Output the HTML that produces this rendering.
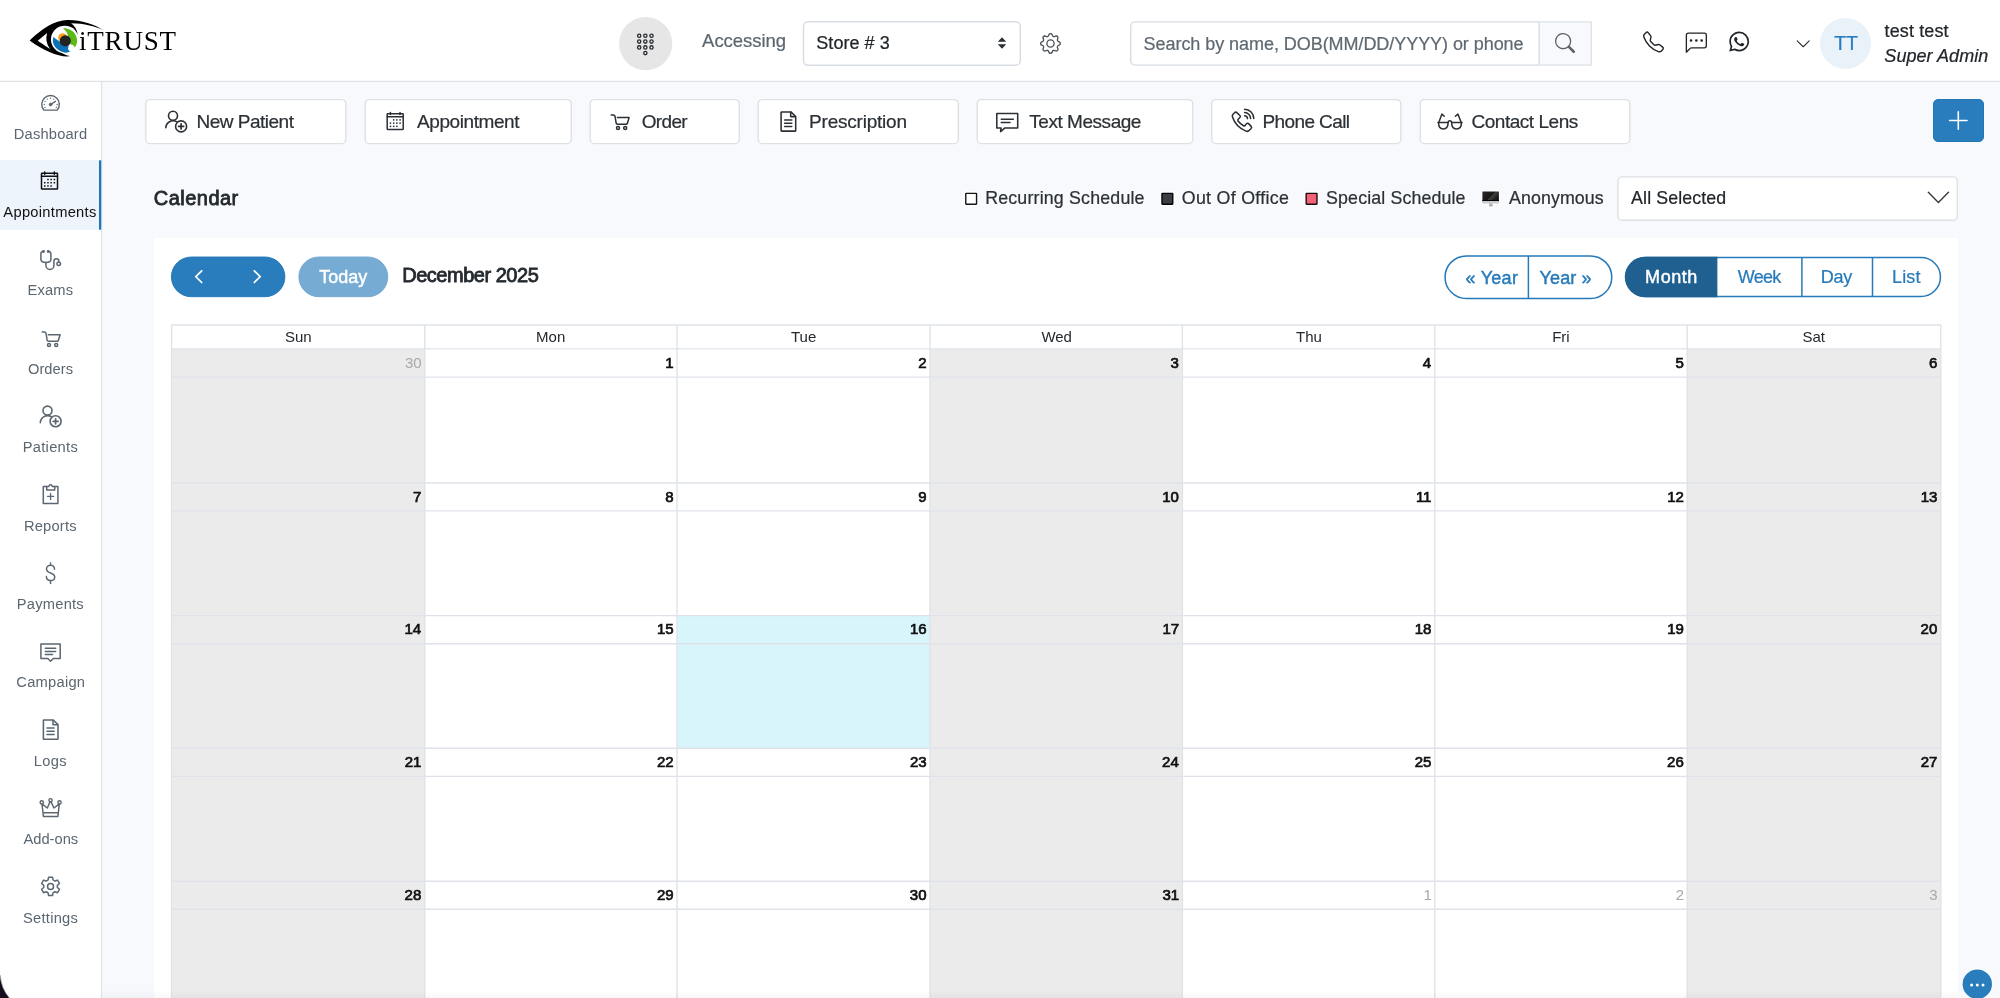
<!DOCTYPE html>
<html lang="en">
<head>
<meta charset="utf-8">
<title>iTRUST - Calendar</title>
<style>
*{box-sizing:border-box;margin:0;padding:0}
html,body{width:2000px;height:998px;overflow:hidden;background:#f7f9fc;font-family:"Liberation Sans",sans-serif;color:#212529}
body{position:relative}
#txt{position:absolute;left:0;top:0;width:2000px;height:998px;will-change:transform}
.t{position:absolute;white-space:nowrap}
svg{overflow:visible}
</style>
</head>
<body>
<div style="position:absolute;left:0px;top:0px;width:2000px;height:81px;background:#fff;"></div>
<div style="position:absolute;left:0px;top:81px;width:101px;height:917px;background:#fff;"></div>
<div style="position:absolute;left:0px;top:160px;width:98px;height:70px;background:#eef4fc;"></div>
<div style="position:absolute;left:154px;top:238px;width:1804px;height:760px;background:#fff;"></div>
<svg style="position:absolute;left:20px;top:10px;" width="170" height="60" viewBox="20 10 170 60">
<path d="M29.7 40.4 C34 36.3 41 30.2 48.5 25.8 C54 22.4 61 20 67.4 19.9 C80 19.5 94 24 104.6 30.5 C96 26.8 84 23.3 71.1 23.3 C75 26 77.2 30.2 77.8 34.9 C76 30.8 74 28.3 71.3 27.3 A13.8 13.8 0 1 0 61.7 52.9 C64.5 54.5 67.5 55.6 70.4 56.1 C61 58 44 51 29.7 40.4 Z" fill="#000"/>
<path d="M37.7 40.7 L47.1 32.9 A18 18 0 0 0 50 48.9 Z" fill="#fff"/>
<path d="M63.1 28.4 C67.5 28 72.5 30.5 74.9 33.8 C77.2 37.3 77.8 41.5 76.3 45.1 C75.8 46.3 75.2 47 74.4 47.5 C74.3 46 73.6 45.3 72.6 45.1 C71.5 44.9 70.7 44.2 70 43.5 L66 40 L68 35.5 C67.5 33 65.5 30 63.1 28.4 Z" fill="#5cba17"/>
<path d="M53.3 37.1 C52.3 41 53 44.5 55.1 47 C57.5 50 61.5 52.3 65.5 52.7 C67.3 52.8 69 52.3 70.4 51.3 C69 50.7 68 49.7 68.1 48.4 C68.2 47.3 68.5 46.4 68.8 45.6 L65 42 L60 42 C58.5 40.5 56 39.5 53.3 37.1 Z" fill="#0b73b5"/>
<circle cx="62.6" cy="37.6" r="4.4" fill="#f8a21b"/>
<circle cx="65.3" cy="40.9" r="5.6" fill="#232323"/>
</svg>
<svg style="position:absolute;left:0px;top:0px;" width="2000" height="82" viewBox="0 0 2000 82"><circle cx="645.7" cy="43.6" r="26.6" fill="#e6e6e6"/><g fill="none" stroke="#272b30" stroke-width="1.3"><circle cx="639.20" cy="35.80" r="1.65"/><circle cx="645.35" cy="35.80" r="1.65"/><circle cx="651.50" cy="35.80" r="1.65"/><circle cx="639.20" cy="41.60" r="1.65"/><circle cx="645.35" cy="41.60" r="1.65"/><circle cx="651.50" cy="41.60" r="1.65"/><circle cx="639.20" cy="47.40" r="1.65"/><circle cx="645.35" cy="47.40" r="1.65"/><circle cx="651.50" cy="47.40" r="1.65"/><circle cx="645.35" cy="53.1" r="1.65"/></g></svg>
<div style="position:absolute;left:1820px;top:18px;width:51px;height:51px;background:#e9f1f9;border-radius:50%;"></div>
<div style="position:absolute;left:1933px;top:99px;width:51px;height:43px;background:#297dbd;border:1px solid #2276b6;border-radius:5px;"></div>
<svg style="position:absolute;left:0px;top:0px;" width="2000" height="998" viewBox="0 0 2000 998"><rect x="171.60" y="348.90" width="253.10" height="651.10" fill="#ebebeb"/><rect x="930.00" y="348.90" width="252.40" height="651.10" fill="#ebebeb"/><rect x="1687.20" y="348.90" width="253.60" height="651.10" fill="#ebebeb"/><rect x="677.00" y="615.60" width="253.00" height="132.70" fill="#d9f5fc"/><path d="M171.60 324.30V1000M424.70 324.30V1000M677.00 324.30V1000M930.00 324.30V1000M1182.40 324.30V1000M1434.80 324.30V1000M1687.20 324.30V1000M1940.80 324.30V1000M170.90 325.0H1941.50M171.60 348.9H1940.80M171.60 377.10H1940.80M171.60 483.00H1940.80M171.60 510.90H1940.80M171.60 615.60H1940.80M171.60 643.70H1940.80M171.60 748.30H1940.80M171.60 776.40H1940.80M171.60 881.20H1940.80M171.60 909.20H1940.80" stroke="#dfe3e9" stroke-width="1.4" fill="none"/><path d="M0 81.4H2000" stroke="#dde1e6" stroke-width="1.3"/><path d="M101.55 82V998" stroke="#dfe3ea" stroke-width="1.3"/></svg>
<svg style="position:absolute;left:0px;top:0px;pointer-events:none;" width="2000" height="998" viewBox="0 0 2000 998"><rect x="98.9" y="160.3" width="2.3" height="69.4" fill="#1f76b8"/><rect x="803.5" y="21.8" width="216.8" height="43.4" rx="4.5" fill="#fff" stroke="#d8dde3" stroke-width="1.4"/><g transform="translate(997 37) scale(1.00000 1.00000)"><path d="M5 0.3L9.2 4.8H0.8Z M5 11.7L0.8 7.2H9.2Z" fill="#2b3035"/></g><g transform="translate(1040 33) scale(1.31250 1.31250)"><g fill="#4a5158"><path d="M8 4.754a3.246 3.246 0 1 0 0 6.492 3.246 3.246 0 0 0 0-6.492zM5.754 8a2.246 2.246 0 1 1 4.492 0 2.246 2.246 0 0 1-4.492 0z"/><path d="M9.796 1.343c-.527-1.79-3.065-1.79-3.592 0l-.094.319a.873.873 0 0 1-1.255.52l-.292-.16c-1.64-.892-3.433.902-2.54 2.541l.159.292a.873.873 0 0 1-.52 1.255l-.319.094c-1.79.527-1.79 3.065 0 3.592l.319.094a.873.873 0 0 1 .52 1.255l-.16.292c-.892 1.64.901 3.434 2.541 2.54l.292-.159a.873.873 0 0 1 1.255.52l.094.319c.527 1.79 3.065 1.79 3.592 0l.094-.319a.873.873 0 0 1 1.255-.52l.292.16c1.64.893 3.434-.902 2.54-2.541l-.159-.292a.873.873 0 0 1 .52-1.255l.319-.094c1.79-.527 1.79-3.065 0-3.592l-.319-.094a.873.873 0 0 1-.52-1.255l.16-.292c.893-1.64-.902-3.433-2.541-2.54l-.292.159a.873.873 0 0 1-1.255-.52l-.094-.319zm-2.633.283c.246-.835 1.428-.835 1.674 0l.094.319a1.873 1.873 0 0 0 2.693 1.115l.291-.16c.764-.415 1.6.42 1.184 1.185l-.159.292a1.873 1.873 0 0 0 1.116 2.692l.318.094c.835.246.835 1.428 0 1.674l-.319.094a1.873 1.873 0 0 0-1.115 2.693l.16.291c.415.764-.42 1.6-1.185 1.184l-.291-.159a1.873 1.873 0 0 0-2.693 1.116l-.094.318c-.246.835-1.428.835-1.674 0l-.094-.319a1.873 1.873 0 0 0-2.692-1.115l-.292.16c-.764.415-1.6-.42-1.184-1.185l.159-.291A1.873 1.873 0 0 0 1.945 8.93l-.319-.094c-.835-.246-.835-1.428 0-1.674l.319-.094A1.873 1.873 0 0 0 3.06 4.377l-.16-.292c-.415-.764.42-1.6 1.185-1.184l.292.159a1.873 1.873 0 0 0 2.692-1.115l.094-.319z"/></g></g><path d="M1539.3 21.9H1135A4.3 4.3 0 0 0 1130.7 26.2V60.8A4.3 4.3 0 0 0 1135 65.1H1539.3Z" fill="#fff" stroke="#d8dde3" stroke-width="1.4"/><rect x="1539.3" y="21.9" width="52" height="43.2" fill="#f7f9fc" stroke="#e0e4e9" stroke-width="1.4"/><g transform="translate(1555 33) scale(1.25000 1.25000)"><g fill="#5a626a"><path d="M11.742 10.344a6.5 6.5 0 1 0-1.397 1.398h-.001c.03.04.062.078.098.115l3.85 3.85a1 1 0 0 0 1.415-1.414l-3.85-3.85a1.007 1.007 0 0 0-.115-.1zM12 6.5a5.5 5.5 0 1 1-11 0 5.5 5.5 0 0 1 11 0z"/></g></g><g transform="translate(1643 31.5) scale(1.31250 1.31250)"><g fill="#212529"><path d="M3.654 1.328a.678.678 0 0 0-1.015-.063L1.605 2.3c-.483.484-.661 1.169-.45 1.77a17.568 17.568 0 0 0 4.168 6.608 17.569 17.569 0 0 0 6.608 4.168c.601.211 1.286.033 1.77-.45l1.034-1.034a.678.678 0 0 0-.063-1.015l-2.307-1.794a.678.678 0 0 0-.58-.122l-2.19.547a1.745 1.745 0 0 1-1.657-.459L5.482 8.062a1.745 1.745 0 0 1-.46-1.657l.548-2.19a.678.678 0 0 0-.122-.58L3.654 1.328zM1.884.511a1.745 1.745 0 0 1 2.612.163L6.29 2.98c.329.423.445.974.315 1.494l-.547 2.19a.678.678 0 0 0 .178.643l2.457 2.457a.678.678 0 0 0 .644.178l2.189-.547a1.745 1.745 0 0 1 1.494.315l2.306 1.794c.829.645.905 1.87.163 2.611l-1.034 1.034c-.74.74-1.846 1.065-2.877.702a18.634 18.634 0 0 1-7.01-4.42 18.634 18.634 0 0 1-4.42-7.009c-.362-1.03-.037-2.137.703-2.877L1.885.511z"/></g></g><g transform="translate(1685.7 32.5) scale(1.33125 1.33125)"><g fill="#212529"><path d="M14 1a1 1 0 0 1 1 1v8a1 1 0 0 1-1 1H4.414A2 2 0 0 0 3 11.586l-2 2V2a1 1 0 0 1 1-1h12zM2 0a2 2 0 0 0-2 2v12.793a.5.5 0 0 0 .854.353l2.853-2.853A1 1 0 0 1 4.414 12H14a2 2 0 0 0 2-2V2a2 2 0 0 0-2-2H2z"/><path d="M5 6a1 1 0 1 1-2 0 1 1 0 0 1 2 0zm4 0a1 1 0 1 1-2 0 1 1 0 0 1 2 0zm4 0a1 1 0 1 1-2 0 1 1 0 0 1 2 0z"/></g></g><g transform="translate(1729.2 31.6) scale(1.25000 1.25000)"><g fill="#212529"><path d="M13.601 2.326A7.854 7.854 0 0 0 7.994 0C3.627 0 .068 3.558.064 7.926c0 1.399.366 2.76 1.057 3.965L0 16l4.204-1.102a7.933 7.933 0 0 0 3.79.965h.004c4.368 0 7.926-3.558 7.93-7.93A7.898 7.898 0 0 0 13.6 2.326zM7.994 14.521a6.573 6.573 0 0 1-3.356-.92l-.24-.144-2.494.654.666-2.433-.156-.251a6.56 6.56 0 0 1-1.007-3.505c0-3.626 2.957-6.584 6.591-6.584a6.56 6.56 0 0 1 4.66 1.931 6.557 6.557 0 0 1 1.928 4.66c-.004 3.639-2.961 6.592-6.592 6.592zm3.615-4.934c-.197-.099-1.17-.578-1.353-.646-.182-.065-.315-.099-.445.099-.133.197-.513.646-.627.775-.114.133-.232.148-.43.05-.197-.1-.836-.308-1.592-.985-.59-.525-.985-1.175-1.103-1.372-.114-.198-.011-.304.088-.403.087-.088.197-.232.296-.346.1-.114.133-.198.198-.33.065-.134.034-.248-.015-.347-.05-.099-.445-1.076-.612-1.47-.16-.389-.323-.335-.445-.34-.114-.007-.247-.007-.38-.007a.729.729 0 0 0-.529.247c-.182.198-.691.677-.691 1.654 0 .977.71 1.916.81 2.049.098.133 1.394 2.132 3.383 2.992.47.205.84.326 1.129.418.475.152.904.129 1.246.08.38-.058 1.171-.48 1.338-.943.164-.464.164-.86.114-.943-.049-.084-.182-.133-.38-.232z"/></g></g><g transform="translate(1795.2 35.8) scale(1.00000 1.00000)"><path fill="#212529" d="M1.646 4.646a.5.5 0 0 1 .708 0L8 10.293l5.646-5.647a.5.5 0 0 1 .708.708l-6 6a.5.5 0 0 1-.708 0l-6-6a.5.5 0 0 1 0-.708z"/></g><rect x="145.80" y="99.6" width="200.00" height="44" rx="4.3" fill="#fff" stroke="#dde1e5" stroke-width="1.4"/><rect x="365.20" y="99.6" width="206.10" height="44" rx="4.3" fill="#fff" stroke="#dde1e5" stroke-width="1.4"/><rect x="590.20" y="99.6" width="149.10" height="44" rx="4.3" fill="#fff" stroke="#dde1e5" stroke-width="1.4"/><rect x="758.20" y="99.6" width="200.10" height="44" rx="4.3" fill="#fff" stroke="#dde1e5" stroke-width="1.4"/><rect x="977.20" y="99.6" width="215.60" height="44" rx="4.3" fill="#fff" stroke="#dde1e5" stroke-width="1.4"/><rect x="1211.70" y="99.6" width="189.10" height="44" rx="4.3" fill="#fff" stroke="#dde1e5" stroke-width="1.4"/><rect x="1420.20" y="99.6" width="209.60" height="44" rx="4.3" fill="#fff" stroke="#dde1e5" stroke-width="1.4"/><g fill="none" stroke="#2b3035" stroke-width="1.6" stroke-linecap="round" stroke-linejoin="round"><g transform="translate(0.00 0.00)"><circle cx="173" cy="115.7" r="4.5"/><path d="M165.8 127.8A7.4 7.4 0 0 1 176.6 121.6"/><circle cx="181.1" cy="126.4" r="5.5"/><path d="M178.6 126.4H183.6M181.1 123.9V128.9" stroke-width="1.7"/></g></g><g fill="none" stroke="#2b3035" stroke-width="1.5" stroke-linecap="round" stroke-linejoin="round"><g transform="translate(0.00 0.00)"><rect x="387.2" y="113.7" width="16" height="15.8" rx="0.4"/><path d="M387.2 116.7H403.2M390.4 112.4V114.6M400 112.4V114.6"/><rect x="392.93" y="119.14" width="1.5" height="1.5" fill="#2b3035" stroke="none"/><rect x="396.08" y="119.14" width="1.5" height="1.5" fill="#2b3035" stroke="none"/><rect x="399.33" y="119.14" width="1.5" height="1.5" fill="#2b3035" stroke="none"/><rect x="389.71" y="122.38" width="1.5" height="1.5" fill="#2b3035" stroke="none"/><rect x="392.93" y="122.38" width="1.5" height="1.5" fill="#2b3035" stroke="none"/><rect x="396.08" y="122.38" width="1.5" height="1.5" fill="#2b3035" stroke="none"/><rect x="399.33" y="122.38" width="1.5" height="1.5" fill="#2b3035" stroke="none"/><rect x="389.71" y="125.63" width="1.5" height="1.5" fill="#2b3035" stroke="none"/><rect x="392.93" y="125.63" width="1.5" height="1.5" fill="#2b3035" stroke="none"/><rect x="396.08" y="125.63" width="1.5" height="1.5" fill="#2b3035" stroke="none"/></g></g><g fill="none" stroke="#2b3035" stroke-width="1.5" stroke-linecap="round" stroke-linejoin="round"><g transform="translate(0.00 0.00)"><path d="M611.2 114.9H613.2C614.3 114.9 614.9 115.5 615.1 116.6L616.1 123C616.3 123.9 616.8 124.2 617.6 124.2H626C626.8 124.2 627.2 123.9 627.4 123.2L629.1 117.6H617.4"/><circle cx="618" cy="127.95" r="1.5"/><circle cx="625.2" cy="127.95" r="1.5"/></g></g><g fill="none" stroke="#2b3035" stroke-width="1.55" stroke-linecap="round" stroke-linejoin="round"><g transform="translate(0.00 0.00)"><path d="M781.1 112.3V130.6Q781.1 131.1 781.6 131.1H795.2Q795.7 131.1 795.7 130.6V116.5L790.9 111.9H781.6Q781.1 111.9 781.1 112.3Z"/><path d="M790.7 112.2V116.6H795.4"/><path d="M784.7 120H791.8M784.7 123.2H791.8M784.7 126.4H791.8"/></g></g><g fill="none" stroke="#2b3035" stroke-width="1.55" stroke-linecap="round" stroke-linejoin="round"><g transform="translate(0.00 0.00)"><path d="M996.8 113.5H1017.7V127.9H1004.9L1000.6 131.6L1001 127.9H996.8Z"/><path d="M1001.3 119.2H1013.3M1001.3 122.4H1010"/></g></g><g fill="none" stroke="#2b3035" stroke-width="1.55" stroke-linecap="round" stroke-linejoin="round"><g transform="translate(0.00 0.00)"><path d="M1234.6 112.7C1235.2 112 1236.1 111.9 1236.8 112.6L1239.9 115.5C1240.5 116.1 1240.5 116.9 1239.9 117.5L1238.2 119.2C1237.6 119.8 1237.7 120.4 1238.1 121C1239.6 123 1241.6 124.6 1243.6 125.7C1244.2 126 1244.8 125.9 1245.3 125.4L1246.6 123.6C1247.2 123 1248 123 1248.6 123.6L1251.2 126.4C1251.8 127.1 1251.7 127.9 1251.1 128.5L1248.8 130.7C1248 131.4 1247 131.5 1246 131.1C1239.6 128.7 1234.6 123.4 1232.5 117.1C1232.1 116 1232.2 115.1 1233 114.3Z"/><path d="M1244.6 115.8A3 3 0 0 1 1247.5 118.6M1244.6 112.5A6.2 6.2 0 0 1 1250.6 118.5M1244.6 109.2A9.4 9.4 0 0 1 1253.8 118.5"/></g></g><g fill="none" stroke="#2b3035" stroke-width="1.5" stroke-linecap="round" stroke-linejoin="round"><g transform="translate(0.00 0.00)"><path d="M1438 122.5H1448.1A1.75 1.75 0 0 1 1451.6 122.5H1462"/><path d="M1438.5 122.5C1438.5 126.5 1440.5 128.9 1443.3 128.9C1446.1 128.9 1448.1 126.5 1448.1 122.5M1451.6 122.5C1451.6 126.5 1453.6 128.9 1456.5 128.9C1459.4 128.9 1461.5 126.5 1461.5 122.5"/><path d="M1438.8 122.5L1441.9 114.1L1444.2 116.3M1461.2 122.5L1457.9 114.1L1455.4 116.3"/></g></g><path d="M1949.6 120.5H1967M1958.3 111.8V129.2" stroke="#fff" stroke-width="1.6" stroke-linecap="round" fill="none"/><g fill="none" stroke="#5b6670" stroke-width="1.4" stroke-linecap="round" stroke-linejoin="round"><g transform="translate(0.00 0.00)"><path d="M43.9 110.1A8.8 8.8 0 1 1 57.2 110.1Z"/><circle cx="50.55" cy="104.5" r="1.5" fill="#5b6670" stroke-width="0.6"/><path d="M50.55 104.5L55.5 101.4"/><circle cx="44.94" cy="107.40" r="0.65" fill="#5b6670" stroke="none"/><circle cx="44.30" cy="104.51" r="0.65" fill="#5b6670" stroke="none"/><circle cx="45.10" cy="101.47" r="0.65" fill="#5b6670" stroke="none"/><circle cx="47.34" cy="99.06" r="0.65" fill="#5b6670" stroke="none"/><circle cx="50.55" cy="98.26" r="0.65" fill="#5b6670" stroke="none"/><circle cx="53.76" cy="99.06" r="0.65" fill="#5b6670" stroke="none"/><circle cx="57.12" cy="104.51" r="0.65" fill="#5b6670" stroke="none"/><circle cx="56.32" cy="107.40" r="0.65" fill="#5b6670" stroke="none"/></g></g><g fill="none" stroke="#111" stroke-width="1.5" stroke-linecap="round" stroke-linejoin="round"><g transform="translate(-345.70 59.60)"><rect x="387.2" y="113.7" width="16" height="15.8" rx="0.4"/><path d="M387.2 116.7H403.2M390.4 112.4V114.6M400 112.4V114.6"/><rect x="392.93" y="119.14" width="1.5" height="1.5" fill="#111" stroke="none"/><rect x="396.08" y="119.14" width="1.5" height="1.5" fill="#111" stroke="none"/><rect x="399.33" y="119.14" width="1.5" height="1.5" fill="#111" stroke="none"/><rect x="389.71" y="122.38" width="1.5" height="1.5" fill="#111" stroke="none"/><rect x="392.93" y="122.38" width="1.5" height="1.5" fill="#111" stroke="none"/><rect x="396.08" y="122.38" width="1.5" height="1.5" fill="#111" stroke="none"/><rect x="399.33" y="122.38" width="1.5" height="1.5" fill="#111" stroke="none"/><rect x="389.71" y="125.63" width="1.5" height="1.5" fill="#111" stroke="none"/><rect x="392.93" y="125.63" width="1.5" height="1.5" fill="#111" stroke="none"/><rect x="396.08" y="125.63" width="1.5" height="1.5" fill="#111" stroke="none"/></g></g><g fill="none" stroke="#5b6670" stroke-width="1.5" stroke-linecap="round" stroke-linejoin="round"><g transform="translate(0.00 0.00)"><path d="M43.3 251.6C41.8 251.6 40.9 252.4 40.9 253.8V259.6C40.9 261.6 43.2 262.5 45.9 262.5C48.6 262.5 50.9 261.6 50.9 259.6V253.8C50.9 252.4 50 251.6 48.4 251.6"/><circle cx="43.5" cy="251.5" r="0.7" fill="#5b6670"/><circle cx="48.2" cy="251.5" r="0.7" fill="#5b6670"/><path d="M45.9 262.5V265.5A4 4 0 0 0 53.9 265.5V261.3A2.5 2.5 0 0 1 58.9 261.3"/><circle cx="58.7" cy="263.8" r="1.75"/></g></g><g fill="none" stroke="#5b6670" stroke-width="1.5" stroke-linecap="round" stroke-linejoin="round"><g transform="translate(-569.00 217.10)"><path d="M611.2 114.9H613.2C614.3 114.9 614.9 115.5 615.1 116.6L616.1 123C616.3 123.9 616.8 124.2 617.6 124.2H626C626.8 124.2 627.2 123.9 627.4 123.2L629.1 117.6H617.4"/><circle cx="618" cy="127.95" r="1.5"/><circle cx="625.2" cy="127.95" r="1.5"/></g></g><g fill="none" stroke="#5b6670" stroke-width="1.6" stroke-linecap="round" stroke-linejoin="round"><g transform="translate(-125.50 294.90)"><circle cx="173" cy="115.7" r="4.5"/><path d="M165.8 127.8A7.4 7.4 0 0 1 176.6 121.6"/><circle cx="181.1" cy="126.4" r="5.5"/><path d="M178.6 126.4H183.6M181.1 123.9V128.9" stroke-width="1.7"/></g></g><g fill="none" stroke="#5b6670" stroke-width="1.5" stroke-linecap="round" stroke-linejoin="round"><g transform="translate(0.00 0.00)"><path d="M43.3 486.5H48.5C49.2 486.4 49.3 484.4 50.55 484.4C51.8 484.4 51.9 486.4 52.6 486.5H57.9V503.5H43.3Z"/><path d="M46.7 486.6V490H54.7V486.6"/><path d="M47.5 496.3H53.6M50.55 493.3V499.4" stroke-width="1.35"/></g></g><g fill="none" stroke="#5b6670" stroke-width="1.5" stroke-linecap="round" stroke-linejoin="round"><g transform="translate(0.00 0.00)"><path d="M54.5 569.3C54.5 567 52.8 565.2 50.55 565.2C48.3 565.2 46.5 566.8 46.5 569C46.5 571.4 48.5 572.3 50.55 573C52.8 573.8 54.7 574.8 54.7 577C54.7 579.2 52.8 580.6 50.55 580.6C48.2 580.6 46.4 579 46.4 576.6M50.55 562.9V565.2M50.55 580.6V583.4"/></g></g><g fill="none" stroke="#5b6670" stroke-width="1.5" stroke-linecap="round" stroke-linejoin="round"><g transform="translate(0.00 0.00)"><path d="M40.9 644.1H60.2V658.5H53.3L50.55 661.3L47.8 658.5H40.9Z"/><path d="M45.3 648.2H55.7M45.3 651.4H55.7M45.3 654.6H52.6"/></g></g><g fill="none" stroke="#5b6670" stroke-width="1.55" stroke-linecap="round" stroke-linejoin="round"><g transform="translate(-737.70 608.10)"><path d="M781.1 112.3V130.6Q781.1 131.1 781.6 131.1H795.2Q795.7 131.1 795.7 130.6V116.5L790.9 111.9H781.6Q781.1 111.9 781.1 112.3Z"/><path d="M790.7 112.2V116.6H795.4"/><path d="M784.7 120H791.8M784.7 123.2H791.8M784.7 126.4H791.8"/></g></g><g fill="none" stroke="#5b6670" stroke-width="1.45" stroke-linecap="round" stroke-linejoin="round"><g transform="translate(0.00 0.00)"><circle cx="41.75" cy="802.4" r="1.6"/><circle cx="50.55" cy="800.2" r="1.6"/><circle cx="59.5" cy="802.4" r="1.6"/><path d="M42 804.2L43.4 816.4H57.9L59.3 804.2M42.6 804.4L47.3 808L50 801.9M51.1 801.9L53.9 808L58.7 804.4M43.1 812.8H58.2"/></g></g><g fill="none" stroke="#5b6670" stroke-width="1.5" stroke-linecap="round" stroke-linejoin="round"><g transform="translate(0.00 0.00)"><path d="M48.08 879.96 L48.60 877.21 L52.50 877.21 L53.02 879.96 L54.89 881.04 L57.54 880.11 L59.49 883.50 L57.37 885.32 L57.37 887.48 L59.49 889.30 L57.54 892.69 L54.89 891.76 L53.02 892.84 L52.50 895.59 L48.60 895.59 L48.08 892.84 L46.21 891.76 L43.56 892.69 L41.61 889.30 L43.73 887.48 L43.73 885.32 L41.61 883.50 L43.56 880.11 L46.21 881.04Z"/><circle cx="50.55" cy="886.4" r="3"/></g></g><rect x="963.66" y="191.3" width="15" height="15" rx="1.2" fill="#fff"/><rect x="965.76" y="193.4" width="10.8" height="10.8" rx="0.4" fill="#fff" stroke="#141414" stroke-width="1.4"/><rect x="1159.87" y="191.3" width="15" height="15" rx="1.2" fill="#fff"/><rect x="1161.97" y="193.4" width="10.8" height="10.8" rx="0.4" fill="#3a3f47" stroke="#060606" stroke-width="1.4"/><rect x="1304.07" y="191.3" width="15" height="15" rx="1.2" fill="#fff"/><rect x="1306.17" y="193.4" width="10.8" height="10.8" rx="0.4" fill="#f4627a" stroke="#1c0b0d" stroke-width="1.4"/><rect x="1481.2" y="190.3" width="18.9" height="14.4" rx="1" fill="#fff"/><rect x="1487.6" y="203" width="6.4" height="4.6" fill="#fff"/><defs><linearGradient id="scr" x1="0" y1="0" x2="1" y2="0.55"><stop offset="0" stop-color="#2a2927"/><stop offset="0.6" stop-color="#1a1917"/><stop offset="0.62" stop-color="#444"/><stop offset="1" stop-color="#151515"/></linearGradient></defs><rect x="1482.4" y="191.5" width="16.5" height="9.6" fill="url(#scr)"/><rect x="1482.4" y="200" width="16.5" height="1.1" fill="#050505"/><rect x="1482.2" y="201.1" width="16.9" height="2.4" fill="#c9c9cd"/><rect x="1489" y="203.5" width="3.7" height="3" fill="#b3b3b7"/><rect x="1618" y="176.9" width="339.3" height="43.4" rx="4.3" fill="#fff" stroke="#dde1e5" stroke-width="1.4"/><path d="M1928.3 192.3L1938.4 202.6L1948.5 192.3" fill="none" stroke="#343a40" stroke-width="1.4" stroke-linecap="round" stroke-linejoin="round"/><rect x="171.4" y="257" width="113.5" height="39.7" rx="19.85" fill="#297dbd" stroke="#2276b6" stroke-width="0.9"/><rect x="298.9" y="257" width="88.9" height="39.7" rx="19.85" fill="#76abd4" stroke="#70a6d0" stroke-width="0.9"/><path d="M201.7 270.8L195.8 276.6L201.7 282.5M254.3 270.8L260.2 276.6L254.3 282.5" fill="none" stroke="#fff" stroke-width="1.75" stroke-linecap="round" stroke-linejoin="round"/><rect x="1445.05" y="255.9" width="166.7" height="42.6" rx="21.3" fill="#fff" stroke="#277ab9" stroke-width="1.5"/><path d="M1528.4 255.9V298.5" stroke="#277ab9" stroke-width="1.5"/><rect x="1626.25" y="257.5" width="314.2" height="39" rx="19.5" fill="#fff" stroke="#277ab9" stroke-width="1.5"/><path d="M1717.4 256.75V297.25H1645A20.25 20.25 0 0 1 1645 256.75Z" fill="#1f6091"/><path d="M1801.9 257.5V296.5M1872.5 257.5V296.5" stroke="#277ab9" stroke-width="1.5"/><path d="M-1 965V998H9.2A42 42 0 0 1 -0.2 971Z" fill="#150d1c"/><path d="M9.2 998A42 42 0 0 1 0.2 975" fill="none" stroke="#777" stroke-width="0.6"/><circle cx="1977.3" cy="984.2" r="15.6" fill="#fff"/><circle cx="1977.3" cy="984.2" r="14.7" fill="#297dbd"/><circle cx="1971.6" cy="985.1" r="1.5" fill="#fff"/><circle cx="1977.3" cy="985.1" r="1.5" fill="#fff"/><circle cx="1983" cy="985.1" r="1.5" fill="#fff"/><defs><linearGradient id="bsh" x1="0" y1="0" x2="0" y2="1"><stop offset="0" stop-color="#000" stop-opacity="0"/><stop offset="1" stop-color="#000" stop-opacity="0.03"/></linearGradient></defs><rect x="102" y="990" width="1856" height="8" fill="url(#bsh)"/></svg>
<div id="txt"><span class="t" style="left:79.06px;top:25px;font-size:27px;line-height:32px;color:#000;letter-spacing:0.786px;font-family:'Liberation Serif',serif;">iTRUST</span>
<span class="t" style="left:702.11px;top:29px;font-size:18.5px;line-height:23px;color:#5b6670;letter-spacing:-0.047px;-webkit-text-stroke:0.22px #5b6670;">Accessing</span>
<span class="t" style="left:816.30px;top:32px;font-size:18px;line-height:22px;color:#212529;letter-spacing:0.040px;-webkit-text-stroke:0.22px #212529;">Store # 3</span>
<span class="t" style="left:1143.60px;top:33px;font-size:18px;line-height:22px;color:#5f6972;letter-spacing:-0.055px;-webkit-text-stroke:0.22px #5f6972;">Search by name, DOB(MM/DD/YYYY) or phone</span>
<span class="t" style="left:1834.22px;top:31px;font-size:19.5px;line-height:24px;color:#2a7bbd;letter-spacing:-0.230px;-webkit-text-stroke:0.22px #2a7bbd;">TT</span>
<span class="t" style="left:1884.54px;top:20px;font-size:18px;line-height:22px;color:#212529;letter-spacing:0.131px;-webkit-text-stroke:0.22px #212529;">test test</span>
<span class="t" style="left:1884.36px;top:45px;font-size:18px;line-height:22px;color:#212529;letter-spacing:0.054px;font-style:italic;-webkit-text-stroke:0.22px #212529;">Super Admin</span>
<span class="t" style="left:196.59px;top:110px;font-size:19px;line-height:23px;color:#2b3035;letter-spacing:-0.511px;-webkit-text-stroke:0.22px #2b3035;">New Patient</span>
<span class="t" style="left:417.11px;top:110px;font-size:19px;line-height:23px;color:#2b3035;letter-spacing:-0.431px;-webkit-text-stroke:0.22px #2b3035;">Appointment</span>
<span class="t" style="left:641.75px;top:110px;font-size:19px;line-height:23px;color:#2b3035;letter-spacing:-0.680px;-webkit-text-stroke:0.22px #2b3035;">Order</span>
<span class="t" style="left:809.09px;top:110px;font-size:19px;line-height:23px;color:#2b3035;letter-spacing:-0.216px;-webkit-text-stroke:0.22px #2b3035;">Prescription</span>
<span class="t" style="left:1029.23px;top:110px;font-size:19px;line-height:23px;color:#2b3035;letter-spacing:-0.455px;-webkit-text-stroke:0.22px #2b3035;">Text Message</span>
<span class="t" style="left:1262.39px;top:110px;font-size:19px;line-height:23px;color:#2b3035;letter-spacing:-0.586px;-webkit-text-stroke:0.22px #2b3035;">Phone Call</span>
<span class="t" style="left:1471.46px;top:110px;font-size:19px;line-height:23px;color:#2b3035;letter-spacing:-0.465px;-webkit-text-stroke:0.22px #2b3035;">Contact Lens</span>
<span class="t" style="left:13.80px;top:125px;font-size:14.7px;line-height:18px;color:#5b6670;letter-spacing:0.178px;">Dashboard</span>
<span class="t" style="left:3.35px;top:203px;font-size:14.7px;line-height:18px;color:#111;letter-spacing:0.284px;">Appointments</span>
<span class="t" style="left:27.47px;top:281px;font-size:14.7px;line-height:18px;color:#5b6670;letter-spacing:0.171px;">Exams</span>
<span class="t" style="left:27.99px;top:360px;font-size:14.7px;line-height:18px;color:#5b6670;letter-spacing:0.033px;">Orders</span>
<span class="t" style="left:22.72px;top:438px;font-size:14.7px;line-height:18px;color:#5b6670;letter-spacing:0.279px;">Patients</span>
<span class="t" style="left:23.92px;top:517px;font-size:14.7px;line-height:18px;color:#5b6670;letter-spacing:0.207px;">Reports</span>
<span class="t" style="left:16.82px;top:595px;font-size:14.7px;line-height:18px;color:#5b6670;letter-spacing:0.221px;">Payments</span>
<span class="t" style="left:16.37px;top:673px;font-size:14.7px;line-height:18px;color:#5b6670;letter-spacing:0.237px;">Campaign</span>
<span class="t" style="left:33.77px;top:752px;font-size:14.7px;line-height:18px;color:#5b6670;letter-spacing:0.364px;">Logs</span>
<span class="t" style="left:23.45px;top:830px;font-size:14.7px;line-height:18px;color:#5b6670;letter-spacing:0.010px;">Add-ons</span>
<span class="t" style="left:23.09px;top:909px;font-size:14.7px;line-height:18px;color:#5b6670;letter-spacing:0.248px;">Settings</span>
<span class="t" style="left:153.80px;top:186px;font-size:20px;line-height:24px;color:#24292e;letter-spacing:0.471px;-webkit-text-stroke:0.8px #24292e;">Calendar</span>
<span class="t" style="left:985.19px;top:187px;font-size:17.8px;line-height:22px;color:#2b3035;letter-spacing:0.184px;-webkit-text-stroke:0.22px #2b3035;">Recurring Schedule</span>
<span class="t" style="left:1181.81px;top:187px;font-size:17.8px;line-height:22px;color:#2b3035;letter-spacing:0.299px;-webkit-text-stroke:0.22px #2b3035;">Out Of Office</span>
<span class="t" style="left:1326.11px;top:187px;font-size:17.8px;line-height:22px;color:#2b3035;letter-spacing:0.133px;-webkit-text-stroke:0.22px #2b3035;">Special Schedule</span>
<span class="t" style="left:1508.91px;top:187px;font-size:17.8px;line-height:22px;color:#2b3035;letter-spacing:0.115px;-webkit-text-stroke:0.22px #2b3035;">Anonymous</span>
<span class="t" style="left:1631.11px;top:187px;font-size:17.8px;line-height:22px;color:#212529;letter-spacing:0.106px;-webkit-text-stroke:0.22px #212529;">All Selected</span>
<span class="t" style="left:319.26px;top:266px;font-size:18px;line-height:22px;color:#fff;letter-spacing:-0.037px;-webkit-text-stroke:0.45px #fff;">Today</span>
<span class="t" style="left:402.20px;top:263px;font-size:20px;line-height:24px;color:#24292e;letter-spacing:-0.475px;-webkit-text-stroke:0.8px #24292e;">December 2025</span>
<span class="t" style="left:1465.41px;top:267px;font-size:18px;line-height:22px;color:#277ab9;letter-spacing:0.284px;-webkit-text-stroke:0.45px #277ab9;">&laquo; Year</span>
<span class="t" style="left:1539.57px;top:267px;font-size:18px;line-height:22px;color:#277ab9;letter-spacing:0.130px;-webkit-text-stroke:0.45px #277ab9;">Year &raquo;</span>
<span class="t" style="left:1645.09px;top:266px;font-size:18px;line-height:22px;color:#fff;letter-spacing:0.558px;-webkit-text-stroke:0.45px #fff;">Month</span>
<span class="t" style="left:1737.71px;top:266px;font-size:18px;line-height:22px;color:#277ab9;letter-spacing:-0.710px;-webkit-text-stroke:0.22px #277ab9;">Week</span>
<span class="t" style="left:1820.67px;top:266px;font-size:18px;line-height:22px;color:#277ab9;letter-spacing:-0.160px;-webkit-text-stroke:0.22px #277ab9;">Day</span>
<span class="t" style="left:1891.97px;top:266px;font-size:18px;line-height:22px;color:#277ab9;letter-spacing:0.177px;-webkit-text-stroke:0.22px #277ab9;">List</span>
<span class="t" style="left:284.91px;top:327px;font-size:15px;line-height:19px;color:#24292e;">Sun</span>
<span class="t" style="left:536.11px;top:327px;font-size:15px;line-height:19px;color:#24292e;">Mon</span>
<span class="t" style="left:791.01px;top:327px;font-size:15px;line-height:19px;color:#24292e;">Tue</span>
<span class="t" style="left:1041.39px;top:327px;font-size:15px;line-height:19px;color:#24292e;">Wed</span>
<span class="t" style="left:1296.04px;top:327px;font-size:15px;line-height:19px;color:#24292e;">Thu</span>
<span class="t" style="left:1552.15px;top:327px;font-size:15px;line-height:19px;color:#24292e;">Fri</span>
<span class="t" style="left:1802.41px;top:327px;font-size:15px;line-height:19px;color:#24292e;">Sat</span>
<span class="t" style="left:404.88px;top:353px;font-size:15px;line-height:19px;color:#a8a8a8;">30</span>
<span class="t" style="left:665.30px;top:353px;font-size:15px;line-height:19px;color:#111;-webkit-text-stroke:0.7px #111;">1</span>
<span class="t" style="left:918.30px;top:353px;font-size:15px;line-height:19px;color:#111;-webkit-text-stroke:0.7px #111;">2</span>
<span class="t" style="left:1170.62px;top:353px;font-size:15px;line-height:19px;color:#111;-webkit-text-stroke:0.7px #111;">3</span>
<span class="t" style="left:1422.80px;top:353px;font-size:15px;line-height:19px;color:#111;-webkit-text-stroke:0.7px #111;">4</span>
<span class="t" style="left:1675.42px;top:353px;font-size:15px;line-height:19px;color:#111;-webkit-text-stroke:0.7px #111;">5</span>
<span class="t" style="left:1929.02px;top:353px;font-size:15px;line-height:19px;color:#111;-webkit-text-stroke:0.7px #111;">6</span>
<span class="t" style="left:413.00px;top:487px;font-size:15px;line-height:19px;color:#111;-webkit-text-stroke:0.7px #111;">7</span>
<span class="t" style="left:665.22px;top:487px;font-size:15px;line-height:19px;color:#111;-webkit-text-stroke:0.7px #111;">8</span>
<span class="t" style="left:918.30px;top:487px;font-size:15px;line-height:19px;color:#111;-webkit-text-stroke:0.7px #111;">9</span>
<span class="t" style="left:1162.22px;top:487px;font-size:15px;line-height:19px;color:#111;-webkit-text-stroke:0.7px #111;">10</span>
<span class="t" style="left:1415.90px;top:487px;font-size:15px;line-height:19px;color:#111;-webkit-text-stroke:0.7px #111;">11</span>
<span class="t" style="left:1667.17px;top:487px;font-size:15px;line-height:19px;color:#111;-webkit-text-stroke:0.7px #111;">12</span>
<span class="t" style="left:1920.70px;top:487px;font-size:15px;line-height:19px;color:#111;-webkit-text-stroke:0.7px #111;">13</span>
<span class="t" style="left:404.38px;top:619px;font-size:15px;line-height:19px;color:#111;-webkit-text-stroke:0.7px #111;">14</span>
<span class="t" style="left:656.90px;top:619px;font-size:15px;line-height:19px;color:#111;-webkit-text-stroke:0.7px #111;">15</span>
<span class="t" style="left:909.90px;top:619px;font-size:15px;line-height:19px;color:#111;-webkit-text-stroke:0.7px #111;">16</span>
<span class="t" style="left:1162.38px;top:619px;font-size:15px;line-height:19px;color:#111;-webkit-text-stroke:0.7px #111;">17</span>
<span class="t" style="left:1414.70px;top:619px;font-size:15px;line-height:19px;color:#111;-webkit-text-stroke:0.7px #111;">18</span>
<span class="t" style="left:1667.17px;top:619px;font-size:15px;line-height:19px;color:#111;-webkit-text-stroke:0.7px #111;">19</span>
<span class="t" style="left:1920.62px;top:619px;font-size:15px;line-height:19px;color:#111;-webkit-text-stroke:0.7px #111;">20</span>
<span class="t" style="left:404.68px;top:752px;font-size:15px;line-height:19px;color:#111;-webkit-text-stroke:0.7px #111;">21</span>
<span class="t" style="left:656.98px;top:752px;font-size:15px;line-height:19px;color:#111;-webkit-text-stroke:0.7px #111;">22</span>
<span class="t" style="left:909.90px;top:752px;font-size:15px;line-height:19px;color:#111;-webkit-text-stroke:0.7px #111;">23</span>
<span class="t" style="left:1162.08px;top:752px;font-size:15px;line-height:19px;color:#111;-webkit-text-stroke:0.7px #111;">24</span>
<span class="t" style="left:1414.70px;top:752px;font-size:15px;line-height:19px;color:#111;-webkit-text-stroke:0.7px #111;">25</span>
<span class="t" style="left:1667.10px;top:752px;font-size:15px;line-height:19px;color:#111;-webkit-text-stroke:0.7px #111;">26</span>
<span class="t" style="left:1920.77px;top:752px;font-size:15px;line-height:19px;color:#111;-webkit-text-stroke:0.7px #111;">27</span>
<span class="t" style="left:404.60px;top:885px;font-size:15px;line-height:19px;color:#111;-webkit-text-stroke:0.7px #111;">28</span>
<span class="t" style="left:656.98px;top:885px;font-size:15px;line-height:19px;color:#111;-webkit-text-stroke:0.7px #111;">29</span>
<span class="t" style="left:909.83px;top:885px;font-size:15px;line-height:19px;color:#111;-webkit-text-stroke:0.7px #111;">30</span>
<span class="t" style="left:1162.38px;top:885px;font-size:15px;line-height:19px;color:#111;-webkit-text-stroke:0.7px #111;">31</span>
<span class="t" style="left:1423.45px;top:885px;font-size:15px;line-height:19px;color:#a8a8a8;">1</span>
<span class="t" style="left:1675.85px;top:885px;font-size:15px;line-height:19px;color:#a8a8a8;">2</span>
<span class="t" style="left:1929.37px;top:885px;font-size:15px;line-height:19px;color:#a8a8a8;">3</span></div>
</body>
</html>
